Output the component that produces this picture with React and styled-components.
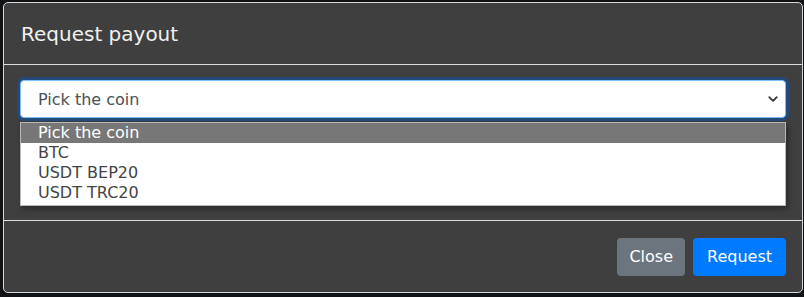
import React from "react";
import styled, { createGlobalStyle } from "styled-components";

const Global = createGlobalStyle`
  html, body { margin: 0; padding: 0; background: #111417; }
  body { font-family: "DejaVu Sans", "Noto Sans", sans-serif; }
  #root { padding: 2px 2px 0 3px; }
`;

const Modal = styled.div`
  width: 798px;
  height: 289px;
  background: #3f3f3f;
  border: 1px solid #d8d8d8;
  border-radius: 5px;
  display: flex;
  flex-direction: column;
  color: #fff;
`;

const Header = styled.div`
  height: 61px;
  padding: 0 17px;
  display: flex;
  align-items: center;
  border-bottom: 1px solid #dcdcdc;
`;

const Title = styled.h5`
  margin: 0;
  font-size: 20px;
  font-weight: 400;
  color: #f0f0f0;
`;

const Body = styled.div`
  position: relative;
  height: 156px;
  padding: 15px 16px 0 16px;
  box-sizing: border-box;
  border-bottom: 1px solid #dcdcdc;
`;

const SelectBox = styled.div`
  height: 38px;
  box-sizing: border-box;
  border: 1px solid #80bdff;
  border-radius: 4px;
  background: #fff;
  box-shadow: 0 0 0 3px rgba(0, 90, 200, 0.45);
  display: flex;
  align-items: center;
  justify-content: space-between;
  padding: 0 6px 0 17px;
  color: #495057;
  font-size: 16px;
`;

const Dropdown = styled.div`
  position: absolute;
  left: 16px;
  right: 16px;
  top: 57px;
  height: 84px;
  box-sizing: border-box;
  background: #fff;
  border: 1px solid #b8b8b8;
  box-shadow: 2px 3px 6px rgba(0, 0, 0, 0.35);
`;

const Option = styled.div`
  height: 20px;
  line-height: 20px;
  padding-left: 17px;
  font-size: 16px;
  background: ${(p) => (p.$active ? "#777777" : "#fff")};
  color: ${(p) => (p.$active ? "#fff" : "#444")};
`;

const Footer = styled.div`
  flex: 1;
  display: flex;
  justify-content: flex-end;
  align-items: center;
  gap: 8px;
  padding: 0 16px;
`;

const Button = styled.button`
  height: 38px;
  border: none;
  border-radius: 4px;
  padding: 0 ${(p) => (p.$primary ? "14px" : "12px")};
  font-family: inherit;
  font-size: 16px;
  color: #fff;
  background: ${(p) => (p.$primary ? "#007bff" : "#6c757d")};
`;

export default function App() {
  return (
    <>
      <Global />
      <Modal>
        <Header>
          <Title>Request payout</Title>
        </Header>
        <Body>
          <SelectBox>
            <span>Pick the coin</span>
            <svg width="12" height="12" viewBox="0 0 16 16">
              <path d="M3 5.5 L8 10.5 L13 5.5" fill="none" stroke="#343a40" strokeWidth="2.4" strokeLinecap="round" strokeLinejoin="round" />
            </svg>
          </SelectBox>
          <Dropdown>
            <Option $active>Pick the coin</Option>
            <Option>BTC</Option>
            <Option>USDT BEP20</Option>
            <Option>USDT TRC20</Option>
          </Dropdown>
        </Body>
        <Footer>
          <Button>Close</Button>
          <Button $primary>Request</Button>
        </Footer>
      </Modal>
    </>
  );
}
